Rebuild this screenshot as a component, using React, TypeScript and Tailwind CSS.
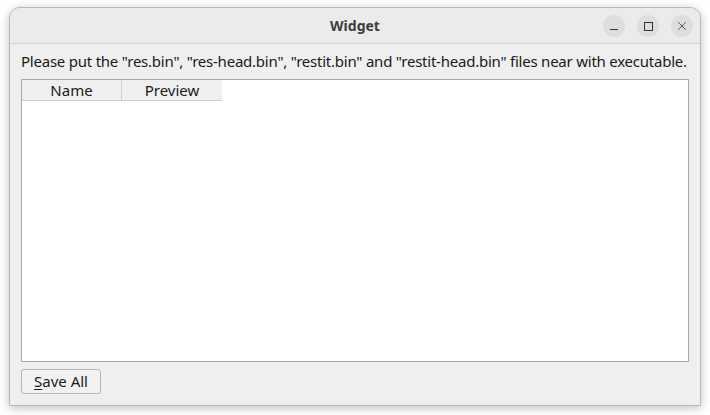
import { X } from 'lucide-react';

const font = { fontFamily: '"Noto Sans", "DejaVu Sans", sans-serif' };

const TitleButton = ({ children }: { children: React.ReactNode }) => (
  <div className="w-[22px] h-[22px] rounded-full bg-[#dedede] flex items-center justify-center text-[#333]">
    {children}
  </div>
);

export default function App() {
  return (
    <div className="w-[710px] h-[415px] bg-white pt-[7px] pl-[9px]" style={font}>
      <div className="w-[692px] h-[399px] bg-[#efefef] rounded-t-[11px] border border-[#b8b8b8] shadow-[0_2px_10px_rgba(0,0,0,0.25)] flex flex-col overflow-hidden">
        <div className="h-[36px] shrink-0 border-b border-[#d3d3d3] bg-[#ebebeb] relative flex items-center justify-center">
          <span className="text-[14px] font-bold text-[#3d3d3d]">Widget</span>
          <div className="absolute right-[7px] top-[7px] flex gap-[12px]">
            <TitleButton>
              <div className="w-[8px] h-[1px] bg-[#333] mt-[6px]" />
            </TitleButton>
            <TitleButton>
              <div className="w-[9px] h-[9px] border border-[#333]" />
            </TitleButton>
            <TitleButton>
              <X size={14} strokeWidth={1.4} />
            </TitleButton>
          </div>
        </div>
        <div className="flex-1 flex flex-col px-[11px]">
          <div className="h-[35px] flex items-center text-[15px] text-[#1a1a1a] tracking-[-0.23px] whitespace-nowrap">
            Please put the "res.bin", "res-head.bin", "restit.bin" and "restit-head.bin" files near with executable.
          </div>
          <div className="h-[283px] border border-[#a9a9a9] bg-white flex flex-col">
            <div className="flex h-[21px] bg-[#efefef]">
              <div className="w-[100px] border-r border-b border-[#cfcfcf] flex items-center justify-center text-[15px] text-[#1a1a1a]">Name</div>
              <div className="w-[100px] border-b border-[#cfcfcf] flex items-center justify-center text-[15px] text-[#1a1a1a]">Preview</div>
              <div className="flex-1 bg-white" />
            </div>
          </div>
          <div className="mt-[7px]">
            <button className="w-[80px] h-[25px] border border-[#b5b5b5] rounded-[3px] bg-[#f2f2f2] text-[15px] text-[#1a1a1a] flex items-center justify-center">
              <span className="underline underline-offset-2">S</span>ave All
            </button>
          </div>
        </div>
      </div>
    </div>
  );
}
